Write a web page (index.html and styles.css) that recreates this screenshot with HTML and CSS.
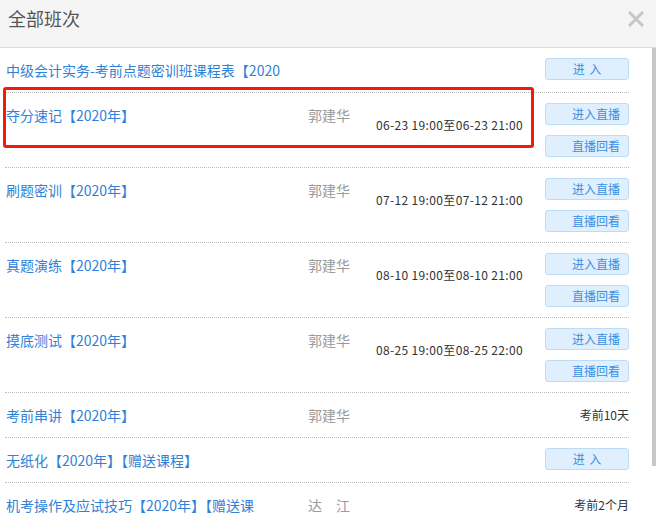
FILE: index.html
```html
<!DOCTYPE html>
<html lang="zh-CN">
<head>
  <meta charset="UTF-8" />
  <title>全部班次</title>
  <link rel="stylesheet" href="styles.css">
</head>
<body>
  <div class="dialog">
    <header class="dialog-head">
      <h2>全部班次</h2>
      <span class="close">
        <svg width="16" height="16" viewBox="0 0 16 16"><path d="M2 2L14 14M14 2L2 14" stroke="#c6c6c6" stroke-width="3" stroke-linecap="square"/></svg>
      </span>
    </header>

    <div class="list">
      <div class="row">
        <div class="title">中级会计实务-考前点题密训班课程表【2020</div>
        <div class="name"></div>
        <div class="time"></div>
        <div class="action"><a class="btn btn-center">进 入</a></div>
      </div>

      <div class="row">
        <div class="title">夺分速记【2020年】</div>
        <div class="name">郭建华</div>
        <div class="time">06-23 19:00至06-23 21:00</div>
        <div class="action">
          <a class="btn">进入直播</a>
          <a class="btn">直播回看</a>
        </div>
      </div>

      <div class="row">
        <div class="title">刷题密训【2020年】</div>
        <div class="name">郭建华</div>
        <div class="time">07-12 19:00至07-12 21:00</div>
        <div class="action">
          <a class="btn">进入直播</a>
          <a class="btn">直播回看</a>
        </div>
      </div>

      <div class="row">
        <div class="title">真题演练【2020年】</div>
        <div class="name">郭建华</div>
        <div class="time">08-10 19:00至08-10 21:00</div>
        <div class="action">
          <a class="btn">进入直播</a>
          <a class="btn">直播回看</a>
        </div>
      </div>

      <div class="row">
        <div class="title">摸底测试【2020年】</div>
        <div class="name">郭建华</div>
        <div class="time">08-25 19:00至08-25 22:00</div>
        <div class="action">
          <a class="btn">进入直播</a>
          <a class="btn">直播回看</a>
        </div>
      </div>

      <div class="row">
        <div class="title">考前串讲【2020年】</div>
        <div class="name">郭建华</div>
        <div class="time"></div>
        <div class="action"><span class="note">考前10天</span></div>
      </div>

      <div class="row">
        <div class="title">无纸化【2020年】【赠送课程】</div>
        <div class="name"></div>
        <div class="time"></div>
        <div class="action"><a class="btn btn-center">进 入</a></div>
      </div>

      <div class="row">
        <div class="title">机考操作及应试技巧【2020年】【赠送课</div>
        <div class="name">达　江</div>
        <div class="time"></div>
        <div class="action"><span class="note">考前2个月</span></div>
      </div>
    </div>

    <div class="scrollbar"></div>
    <div class="mark"></div>
  </div>
</body>
</html>
```

FILE: styles.css
```css
body {
  margin: 0;
  font-family: "Noto Sans CJK SC", "Noto Sans", sans-serif;
  background-color: #fff;
  overflow: hidden;
}
.dialog {
  position: relative;
  width: 656px;
  height: 518px;
  overflow: hidden;
}
.dialog-head {
  height: 47px;
  background-color: #f5f5f5;
  border-bottom: 1px solid #dedede;
  display: flex;
  align-items: flex-start;
  justify-content: space-between;
  padding: 0 12px 0 8px;
  box-sizing: content-box;
}
.dialog-head h2 {
  margin: 0;
  font-size: 18px;
  font-weight: normal;
  color: #555;
  line-height: 36px;
}
.close {
  display: flex;
  margin-top: 11px;
}
.list {
  padding: 0 27px 0 5px;
}
.row {
  display: flex;
  align-items: flex-start;
  padding: 10px 0 10px 1px;
  min-height: 24px;
  border-bottom: 1px dotted #bdbdbd;
}
.title {
  flex: 0 0 302px;
  font-size: 14px;
  line-height: 24px;
  color: #2f82d8;
  white-space: nowrap;
  overflow: hidden;
}
.name {
  flex: 0 0 68px;
  font-size: 14px;
  line-height: 24px;
  color: #9a9a9a;
  white-space: nowrap;
}
.time {
  flex: 1;
  font-size: 12px;
  line-height: 22px;
  padding-top: 11px;
  letter-spacing: 0.35px;
  color: #333;
  white-space: nowrap;
}
.action {
  flex: 0 0 84px;
  display: flex;
  flex-direction: column;
  align-items: flex-end;
  gap: 10px;
}
.btn {
  display: block;
  box-sizing: border-box;
  width: 84px;
  height: 22px;
  line-height: 20px;
  padding-right: 8px;
  text-align: right;
  font-size: 12px;
  color: #3a8fe4;
  background-color: #dfeffd;
  border: 1px solid #bcdcf6;
  border-radius: 3px;
}
.btn-center {
  text-align: center;
  padding-right: 0;
  word-spacing: 2px;
}
.note {
  font-size: 12px;
  line-height: 24px;
  color: #333;
}
.scrollbar {
  position: absolute;
  left: 652px;
  top: 48px;
  width: 4px;
  height: 418px;
  background-color: #c8c8c8;
}
.mark {
  position: absolute;
  left: 3px;
  top: 87px;
  width: 531px;
  height: 61px;
  box-sizing: border-box;
  border: 3px solid #f5180d;
  border-radius: 3px;
}
```
